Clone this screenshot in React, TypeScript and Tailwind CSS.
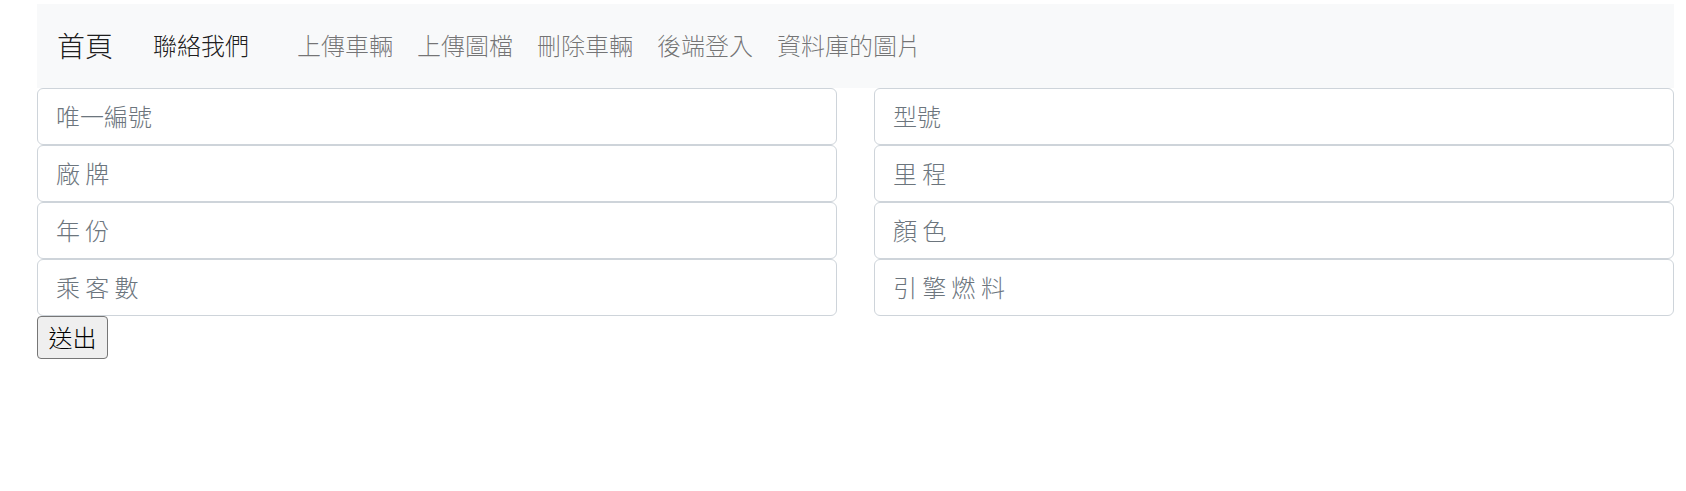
import React from "react";

const FONT = { fontFamily: '"Noto Sans CJK TC", "Noto Sans CJK SC", "Noto Sans", sans-serif' };

const links = ["上傳車輛", "上傳圖檔", "刪除車輛", "後端登入", "資料庫的圖片"];

const left = ["唯一編號", "廠 牌", "年 份", "乘 客 數"];
const right = ["型號", "里 程", "顏 色", "引 擎 燃 料"];

function Field({ ph }: { ph: string }) {
  return (
    <input
      type="text"
      placeholder={ph}
      className="block w-full h-[57px] px-[18px] pb-[3px] border border-[#ced4da] rounded-[6px] bg-white text-[24px] font-light text-[#212529] placeholder:text-[#6c757d] outline-none"
      style={FONT}
    />
  );
}

export default function App() {
  return (
    <div className="w-[1686px] h-[491px] bg-white pt-[4px]" style={FONT}>
      <div className="ml-[37px] w-[1637px]">
        <nav className="h-[84px] bg-[#f8f9fa] flex items-center pl-[20px] pb-[3px]">
          <a className="text-[28px] leading-[42px] font-light text-[rgba(0,0,0,0.9)] mr-[40px]">首頁</a>
          <a className="text-[24px] leading-[36px] font-light text-[rgba(0,0,0,0.9)]">聯絡我們</a>
          <ul className="flex ml-[36px]">
            {links.map((l) => (
              <li key={l} className="px-[12px] text-[24px] leading-[36px] font-light text-[rgba(0,0,0,0.55)]">
                {l}
              </li>
            ))}
          </ul>
        </nav>
        <form onSubmit={(e) => e.preventDefault()}>
          <div className="grid grid-cols-2 gap-x-[37px]">
            <div className="flex flex-col">
              {left.map((p) => (
                <Field key={p} ph={p} />
              ))}
            </div>
            <div className="flex flex-col">
              {right.map((p) => (
                <Field key={p} ph={p} />
              ))}
            </div>
          </div>
          <button
            type="submit"
            className="h-[43px] w-[71px] pb-[2px] bg-[#efefef] border border-[#767676] rounded-[4px] text-[24px] leading-[36px] font-light text-black flex items-center justify-center"
            style={FONT}
          >
            送出
          </button>
        </form>
      </div>
    </div>
  );
}
